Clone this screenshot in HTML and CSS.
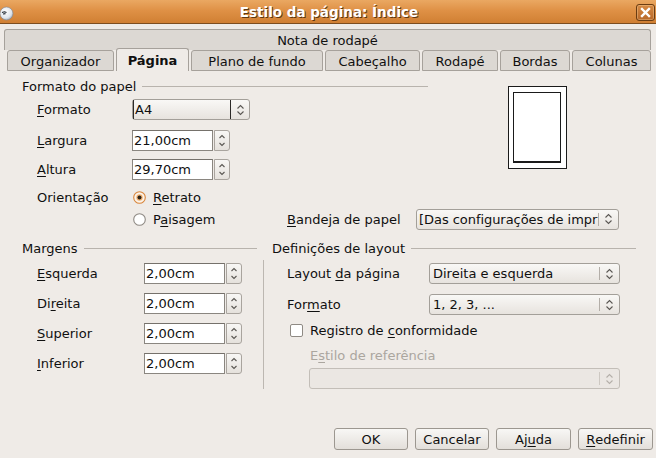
FILE: index.html
```html
<!DOCTYPE html>
<html lang="pt">
<head>
<meta charset="utf-8">
<title>Estilo da página: Índice</title>
<link rel="stylesheet" href="styles.css">
</head>
<body>
<div class="window">
  <div class="titlebar">
    <span class="app-icon">
      <svg width="14" height="15" viewBox="0 0 14 15">
        <defs><radialGradient id="gi" cx="0.4" cy="0.35" r="0.7"><stop offset="0" stop-color="#ffffff"/><stop offset="0.7" stop-color="#dfe5ec"/><stop offset="1" stop-color="#9aa8b8"/></radialGradient></defs>
        <circle cx="6.5" cy="7.5" r="6.5" fill="url(#gi)" stroke="#7d8794" stroke-width="0.6"/>
        <path d="M2 6.5 L4.5 5.8 L6.5 6.6 M3 8 L5.5 7.6" fill="none" stroke="#1d2630" stroke-width="1.1"/>
      </svg>
    </span>
    <div class="title">Estilo da página: Índice</div>
    <div class="close">
      <svg width="11" height="11" viewBox="0 0 11 11"><path d="M2 2 L9 9 M9 2 L2 9" stroke="#fff" stroke-width="2.4" stroke-linecap="square"/></svg>
    </div>
  </div>

  <div class="tabs">
    <div class="tab-top">Nota de rodapé</div>
    <div class="tab-row">
      <div class="tab t-org">Organizador</div>
      <div class="tab t-pag active">Página</div>
      <div class="tab t-plano">Plano de fundo</div>
      <div class="tab t-cab">Cabeçalho</div>
      <div class="tab t-rod">Rodapé</div>
      <div class="tab t-bor">Bordas</div>
      <div class="tab t-col">Colunas</div>
    </div>
  </div>

  <div class="content">
    <div class="paper">
      <div class="paper-main">
        <div class="paper-fields">
          <div class="group-head"><span>Formato do papel</span><i class="rule"></i></div>
          <div class="row sp5">
            <span class="lbl"><u>F</u>ormato</span>
            <div class="combo focus w-a4">
              <span class="val">A4</span><span class="sep"></span>
              <span class="arr"><svg width="9" height="14" viewBox="0 0 9 14"><path d="M1.5 5.5 L4.5 2.5 L7.5 5.5 M1.5 8.5 L4.5 11.5 L7.5 8.5" fill="none" stroke="#5a5753" stroke-width="1.1"/></svg></span>
            </div>
          </div>
          <div class="row sp10">
            <span class="lbl"><u>L</u>argura</span>
            <div class="entry">21,00cm</div>
            <div class="spin"><svg width="8" height="15" viewBox="0 0 8 15"><path d="M1.5 5 L4 2.5 L6.5 5 M1.5 10 L4 12.5 L6.5 10" fill="none" stroke="#5a5753" stroke-width="1.1"/></svg></div>
          </div>
          <div class="row sp8">
            <span class="lbl"><u>A</u>ltura</span>
            <div class="entry">29,70cm</div>
            <div class="spin"><svg width="8" height="15" viewBox="0 0 8 15"><path d="M1.5 5 L4 2.5 L6.5 5 M1.5 10 L4 12.5 L6.5 10" fill="none" stroke="#5a5753" stroke-width="1.1"/></svg></div>
          </div>
          <div class="row radio-row sp8">
            <span class="lbl">Orientação</span>
            <span class="radio">
              <svg width="13" height="13" viewBox="0 0 13 13"><circle cx="6.5" cy="6.5" r="5.8" fill="#fbf3ea" stroke="#d9853a" stroke-width="1.1"/><circle cx="6.5" cy="6.5" r="3.2" fill="#f0b070"/><circle cx="6.5" cy="6.5" r="2" fill="#2b2218"/></svg>
            </span>
            <span><u>R</u>etrato</span>
          </div>
        </div>
        <div class="preview"><div class="sheet"></div></div>
      </div>
      <div class="row tray-row">
        <span class="lbl"></span>
        <span class="radio-group">
          <span class="radio">
            <svg width="13" height="13" viewBox="0 0 13 13"><circle cx="6.5" cy="6.5" r="5.8" fill="#ffffff" stroke="#8f8a84" stroke-width="1.1"/></svg>
          </span>
          <span>P<u>a</u>isagem</span>
        </span>
        <span class="tray-lbl"><u>B</u>andeja de papel</span>
        <div class="combo w-tray">
          <span class="val tray-val">[Das configurações de impr</span><span class="sep"></span>
          <span class="arr"><svg width="9" height="14" viewBox="0 0 9 14"><path d="M1.5 5.5 L4.5 2.5 L7.5 5.5 M1.5 8.5 L4.5 11.5 L7.5 8.5" fill="none" stroke="#5a5753" stroke-width="1.1"/></svg></span>
        </div>
      </div>
    </div>

    <div class="bottom">
      <div class="margins">
        <div class="group-head"><span>Margens</span><i class="rule"></i></div>
        <div class="row sp7">
          <span class="lbl wide"><u>E</u>squerda</span>
          <div class="entry">2,00cm</div>
          <div class="spin"><svg width="8" height="15" viewBox="0 0 8 15"><path d="M1.5 5 L4 2.5 L6.5 5 M1.5 10 L4 12.5 L6.5 10" fill="none" stroke="#5a5753" stroke-width="1.1"/></svg></div>
        </div>
        <div class="row sp9">
          <span class="lbl wide">Di<u>r</u>eita</span>
          <div class="entry">2,00cm</div>
          <div class="spin"><svg width="8" height="15" viewBox="0 0 8 15"><path d="M1.5 5 L4 2.5 L6.5 5 M1.5 10 L4 12.5 L6.5 10" fill="none" stroke="#5a5753" stroke-width="1.1"/></svg></div>
        </div>
        <div class="row sp9">
          <span class="lbl wide"><u>S</u>uperior</span>
          <div class="entry">2,00cm</div>
          <div class="spin"><svg width="8" height="15" viewBox="0 0 8 15"><path d="M1.5 5 L4 2.5 L6.5 5 M1.5 10 L4 12.5 L6.5 10" fill="none" stroke="#5a5753" stroke-width="1.1"/></svg></div>
        </div>
        <div class="row sp9">
          <span class="lbl wide"><u>I</u>nferior</span>
          <div class="entry">2,00cm</div>
          <div class="spin"><svg width="8" height="15" viewBox="0 0 8 15"><path d="M1.5 5 L4 2.5 L6.5 5 M1.5 10 L4 12.5 L6.5 10" fill="none" stroke="#5a5753" stroke-width="1.1"/></svg></div>
        </div>
      </div>
      <div class="vsep"></div>
      <div class="layout">
        <div class="group-head"><span>Definições de layout</span><i class="rule"></i></div>
        <div class="row sp7">
          <span class="lbl lwide">Layout <u>d</u>a página</span>
          <div class="combo w-lay">
            <span class="val">Direita e esquerda</span><span class="sep"></span>
            <span class="arr"><svg width="9" height="14" viewBox="0 0 9 14"><path d="M1.5 5.5 L4.5 2.5 L7.5 5.5 M1.5 8.5 L4.5 11.5 L7.5 8.5" fill="none" stroke="#5a5753" stroke-width="1.1"/></svg></span>
          </div>
        </div>
        <div class="row sp10">
          <span class="lbl lwide">For<u>m</u>ato</span>
          <div class="combo w-lay">
            <span class="val">1, 2, 3, ...</span><span class="sep"></span>
            <span class="arr"><svg width="9" height="14" viewBox="0 0 9 14"><path d="M1.5 5.5 L4.5 2.5 L7.5 5.5 M1.5 8.5 L4.5 11.5 L7.5 8.5" fill="none" stroke="#5a5753" stroke-width="1.1"/></svg></span>
          </div>
        </div>
        <div class="check-row">
          <span class="check"></span>
          <span>Registro de <u>c</u>onformidade</span>
        </div>
        <div class="ref-lbl">E<u>s</u>tilo de referência</div>
        <div class="combo disabled w-ref">
          <span class="val"></span><span class="sep"></span>
          <span class="arr"><svg width="9" height="14" viewBox="0 0 9 14"><path d="M1.5 5.5 L4.5 2.5 L7.5 5.5 M1.5 8.5 L4.5 11.5 L7.5 8.5" fill="none" stroke="#b4afa9" stroke-width="1.1"/></svg></span>
        </div>
      </div>
    </div>
  </div>

  <div class="buttons">
    <div class="btn b74">OK</div>
    <div class="btn b74">Cancelar</div>
    <div class="btn b75">Aj<u>u</u>da</div>
    <div class="btn b75"><u>R</u>edefinir</div>
  </div>
</div>
</body>
</html>
```

FILE: styles.css
```css
html, body {
  margin: 0;
  padding: 0;
}
body {
  width: 656px;
  height: 458px;
  overflow: hidden;
  background: #efebe7;
  font-family: "DejaVu Sans", "Liberation Sans", sans-serif;
  font-size: 13px;
  color: #101010;
}
u { text-decoration-thickness: 1px; text-underline-offset: 2px; }

/* title bar */
.titlebar {
  height: 23px;
  border-bottom: 1px solid #7d4d1f;
  background: linear-gradient(#eaa862 0%, #df9146 45%, #d07f33 100%);
  display: flex;
  align-items: center;
}
.app-icon { width: 14px; height: 15px; margin-top: 3px; display: flex; }
.title {
  flex: 1;
  text-align: center;
  padding-left: 8px;
  color: #ffffff;
  font-weight: bold;
  font-size: 13.5px;
  text-shadow: 1px 1px 0 #5e3611;
}
.close {
  width: 17px;
  height: 15px;
  margin-right: 1px;
  margin-top: 2px;
  border: 1px solid #6a3c12;
  border-radius: 3px;
  background: linear-gradient(#d68a44, #b8692a);
  box-shadow: inset 0 0 0 1px rgba(255, 220, 170, 0.35);
  display: flex;
  align-items: center;
  justify-content: center;
}

/* tabs */
.tabs { padding: 5px 5px 0 4px; }
.tab-top {
  height: 20px;
  border: 1px solid #a6a19b;
  border-bottom: none;
  border-radius: 3px 3px 0 0;
  background: #dcd8d3;
  display: flex;
  align-items: center;
  justify-content: center;
}
.tab-row {
  display: flex;
  gap: 2px;
  padding-left: 3px;
  height: 21px;
}
.tab {
  box-sizing: border-box;
  height: 21px;
  border: 1px solid #a6a19b;
  border-radius: 3px 3px 0 0;
  background: #dcd8d3;
  display: flex;
  align-items: center;
  justify-content: center;
  padding-top: 1px;
}
.tab.active {
  height: 23px;
  margin-top: -2px;
  border-bottom: none;
  background: #efebe7;
  font-weight: bold;
}
.t-org { width: 107px; }
.t-pag { width: 73px; }
.t-plano { width: 132px; }
.t-cab { width: 95px; }
.t-rod { width: 76px; }
.t-bor { width: 70px; }
.t-col { width: 79px; }

/* content */
.content { padding: 7px 0 0 22px; }
.paper-main { display: flex; }
.paper-fields { width: 406px; display: flex; flex-direction: column; }
.group-head { display: flex; align-items: center; height: 16px; white-space: nowrap; }
.group-head .rule { flex: 1; height: 1px; background: #b8b3ad; margin-left: 6px; }

.row { display: flex; align-items: center; height: 21px; }
.lbl { width: 95px; padding-left: 15px; flex-shrink: 0; }
.lbl.wide { width: 107px; }
.lbl.lwide { width: 142px; }
.sp5 { margin-top: 5px; }
.sp7 { margin-top: 7px; }
.sp8 { margin-top: 8px; }
.sp9 { margin-top: 9px; }
.sp10 { margin-top: 10px; }

.radio-row { height: 18px; }
.radio { width: 13px; height: 13px; display: flex; margin: 0 7px 0 1px; }

.entry {
  box-sizing: border-box;
  width: 81px;
  height: 21px;
  border: 1px solid #8a8680;
  border-top-color: #75716b;
  background: #ffffff;
  padding-left: 1px;
  line-height: 19px;
  white-space: nowrap;
}
.spin {
  box-sizing: border-box;
  width: 16px;
  height: 21px;
  margin-left: 1px;
  border: 1px solid #a9a49e;
  border-radius: 0 3px 3px 0;
  background: linear-gradient(#f8f7f5, #e5e1dc);
  display: flex;
  align-items: center;
  justify-content: center;
}

.combo {
  box-sizing: border-box;
  height: 21px;
  display: flex;
  align-items: center;
  border: 1px solid #a39f99;
  border-radius: 3px;
  background: linear-gradient(#f9f8f6, #e7e3de);
}
.combo .val {
  flex: 1;
  min-width: 0;
  padding-left: 3px;
  white-space: nowrap;
  overflow: hidden;
  line-height: 19px;
}
.combo .tray-val { overflow: visible; padding-left: 2px; letter-spacing: -0.05px; }
.combo .sep { width: 1px; height: 13px; background: #b3aea8; }
.combo .arr { width: 19px; display: flex; justify-content: center; }
.combo.focus .val { border-left: 1px solid #2c2a28; padding-left: 1px; }
.combo.focus .sep { height: 19px; background: #2c2a28; }
.combo.focus .arr { width: 18px; }
.w-a4 { width: 118px; }
.w-tray { width: 203px; }
.w-lay { width: 191px; }
.w-ref { width: 311px; margin-top: 4px; margin-left: 37px; }
.combo.disabled { background: #ebe7e3; border-color: #c3beb8; }
.combo.disabled .sep { background: #cdc8c2; }

.preview {
  margin: 8px 0 0 80px;
  box-sizing: border-box;
  width: 59px;
  height: 83px;
  border: 1px solid #1a1a1a;
  background: #ffffff;
  padding: 5px 0 0 4px;
}
.sheet {
  box-sizing: border-box;
  width: 48px;
  height: 71px;
  border: 1px solid #1a1a1a;
  border-bottom-width: 2px;
  background: #ffffff;
}

.tray-row { margin-top: 2px; height: 22px; }
.radio-group { width: 155px; display: flex; align-items: center; flex-shrink: 0; }
.tray-lbl { width: 129px; flex-shrink: 0; }

/* bottom section */
.bottom { display: flex; margin-top: 10px; }
.margins { width: 235px; margin-right: 6px; display: flex; flex-direction: column; }
.vsep { width: 1px; height: 129px; margin-top: 20px; background: #bcb7b1; }
.layout { width: 364px; padding-left: 8px; display: flex; flex-direction: column; }

.check-row { display: flex; align-items: center; height: 17px; margin-top: 7px; padding-left: 18px; }
.check {
  box-sizing: border-box;
  width: 13px;
  height: 13px;
  border: 1px solid #8f8a84;
  border-radius: 2px;
  background: #ffffff;
  margin-right: 7px;
}
.ref-lbl { height: 16px; line-height: 16px; margin-top: 9px; padding-left: 38px; color: #aba69f; }

/* buttons */
.buttons {
  display: flex;
  justify-content: flex-end;
  gap: 7px;
  padding-right: 3px;
  margin-top: 39px;
}
.btn {
  box-sizing: border-box;
  height: 22px;
  border: 1px solid #9c9790;
  border-radius: 3px;
  background: linear-gradient(#f8f7f5, #e3dfda);
  display: flex;
  align-items: center;
  justify-content: center;
}
.b74 { width: 74px; }
.b75 { width: 75px; }
```
